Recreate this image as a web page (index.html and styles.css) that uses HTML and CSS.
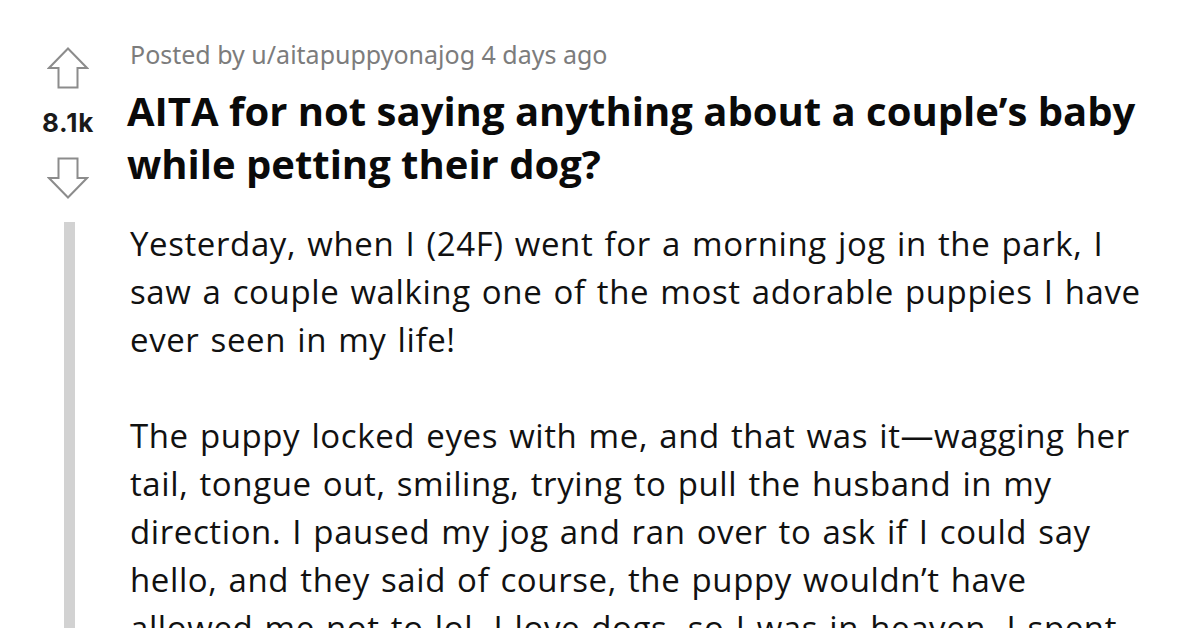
FILE: index.html
```html
<!DOCTYPE html>
<html>
<head>
<meta charset="utf-8">
<link rel="stylesheet" href="styles.css">
</head>
<body>
<div class="post">
  <div class="vote">
    <svg class="arrow up" width="42" height="42" viewBox="0 0 42 42"><polygon points="21,1.5 40,21 30.5,21 30.5,40.5 11.5,40.5 11.5,21 2,21" fill="none" stroke="#8c8c8c" stroke-width="2" stroke-linejoin="miter"/></svg>
    <div class="score">8.1k</div>
    <svg class="arrow down" width="42" height="42" viewBox="0 0 42 42"><polygon points="21,40.5 40,21 30.5,21 30.5,1.5 11.5,1.5 11.5,21 2,21" fill="none" stroke="#8c8c8c" stroke-width="2" stroke-linejoin="miter"/></svg>
  </div>
  <div class="header">
    <div class="meta">Posted by u/aitapuppyonajog 4 days ago</div>
    <h1 class="title">AITA for not saying anything about a couple’s baby while petting their dog?</h1>
  </div>
  <div class="thread"><div class="bar"></div></div>
  <div class="body">
    <p>Yesterday, when I (24F) went for a morning jog in the park, I saw a couple walking one of the most adorable puppies I have ever seen in my life!</p>
    <p>The puppy locked eyes with me, and that was it—wagging her tail, tongue out, smiling, trying to pull the husband in my direction. I paused my jog and ran over to ask if I could say hello, and they said of course, the puppy wouldn’t have allowed me not to lol. I love dogs, so I was in heaven. I spent a good while petting her and chatting.</p>
  </div>
</div>
</body>
</html>
```
FILE: styles.css
```css
html, body {
  margin: 0;
  padding: 0;
  background: #ffffff;
  overflow: hidden;
}
body {
  width: 1200px;
  height: 628px;
  font-family: "Open Sans", "Noto Sans", sans-serif;
  color: #111111;
}
.post {
  display: grid;
  grid-template-columns: 130px 1fr;
  grid-template-rows: auto 1fr;
  height: 628px;
}
.vote {
  display: flex;
  flex-direction: column;
  align-items: center;
  padding-left: 6px;
  padding-top: 47px;
}
.arrow {
  display: block;
}
.score {
  font-family: "Inter", "Roboto", sans-serif;
  font-weight: 700;
  font-size: 26px;
  line-height: 28px;
  letter-spacing: 0.8px;
  margin-top: 20px;
  margin-bottom: 20px;
  color: #1a1a1b;
}
.header {
  padding-top: 39px;
}
.meta {
  font-family: "Noto Sans", "Open Sans", sans-serif;
  font-size: 25px;
  line-height: 30px;
  color: #7c7c7c;
}
.title {
  margin: 15px 0 0 -3px;
  font-size: 40px;
  line-height: 53px;
  font-weight: 700;
  color: #0a0a0a;
  width: 1060px;
}
.thread {
  display: flex;
  justify-content: center;
  padding-left: 9px;
  padding-top: 23px;
}
.bar {
  width: 11px;
  background: #d2d2d2;
  height: 100%;
}
.body {
  padding-top: 21px;
  width: 1013px;
}
.body p {
  margin: 0 0 48px 0;
  font-size: 33px;
  line-height: 48px;
  letter-spacing: 0.6px;
  word-spacing: 2px;
  color: #111111;
}
```
